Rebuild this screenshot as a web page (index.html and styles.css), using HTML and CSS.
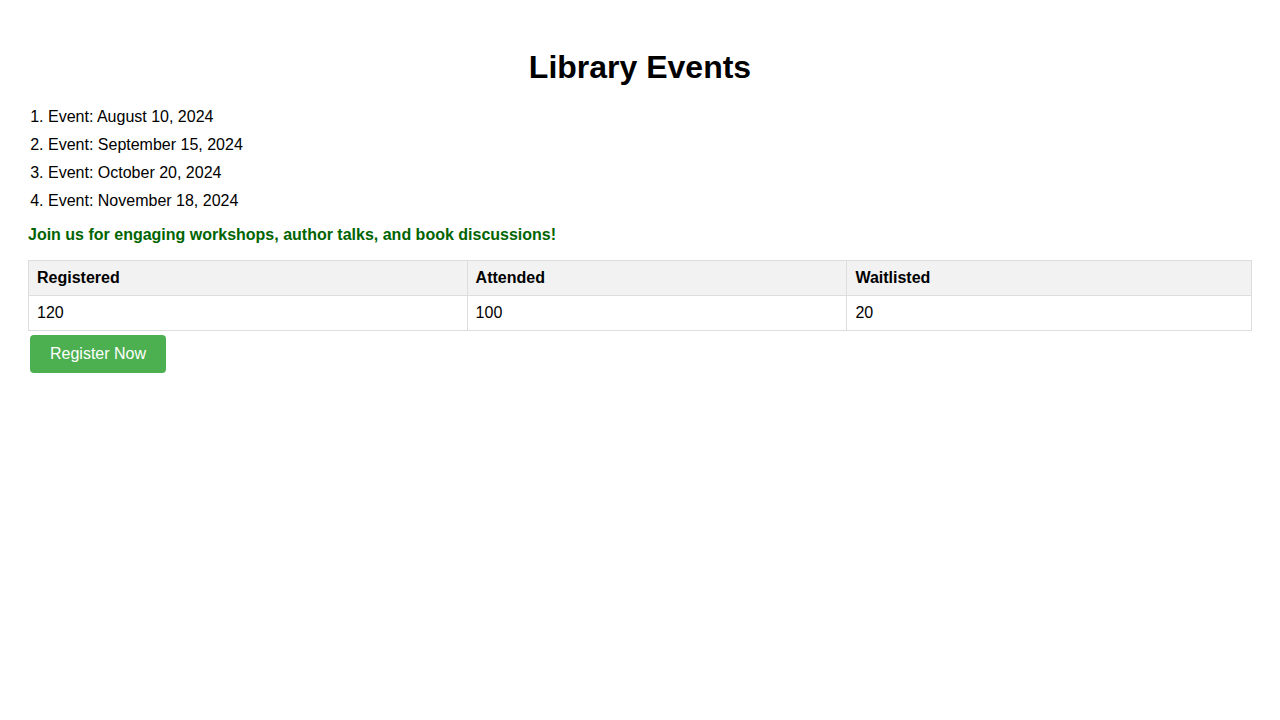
FILE: index.html
```html
<!DOCTYPE html>
<html lang="en">
<head>
<meta charset="utf-8">
<title>Library Events</title>
<link rel="stylesheet" href="styles.css">
</head>
<body>
<div class="page">
  <h1 class="title">Library Events</h1>
  <ol class="events">
    <li>Event: August 10, 2024</li>
    <li>Event: September 15, 2024</li>
    <li>Event: October 20, 2024</li>
    <li>Event: November 18, 2024</li>
  </ol>
  <p class="tagline">Join us for engaging workshops, author talks, and book discussions!</p>
  <table class="stats">
    <thead>
      <tr><th>Registered</th><th>Attended</th><th>Waitlisted</th></tr>
    </thead>
    <tbody>
      <tr><td>120</td><td>100</td><td>20</td></tr>
    </tbody>
  </table>
  <button class="btn">Register Now</button>
</div>
</body>
</html>
```
FILE: styles.css
```css
body {
  margin: 8px;
  font-family: "Liberation Sans", Arial, sans-serif;
  color: #000;
  background: #fff;
}
.page {
  padding: 20px;
}
.title {
  text-align: center;
  font-size: 32px;
  margin: 21.44px 0;
}
.events {
  margin: 16px 0;
  padding-left: 20px;
}
.events li {
  margin-bottom: 10px;
  font-size: 16px;
}
.tagline {
  color: #006400;
  font-weight: bold;
  font-size: 16px;
  margin: 16px 0;
}
.stats {
  width: 100%;
  border-collapse: collapse;
}
.stats th, .stats td {
  border: 1px solid #ddd;
  padding: 8px;
  text-align: left;
  font-size: 16px;
}
.stats th {
  background: #f2f2f2;
}
.btn {
  margin: 4px 2px;
  padding: 10px 20px;
  background: #4CAF50;
  color: #fff;
  border: none;
  border-radius: 4px;
  font-family: "Liberation Sans", Arial, sans-serif;
  font-size: 16px;
  cursor: pointer;
}
```
